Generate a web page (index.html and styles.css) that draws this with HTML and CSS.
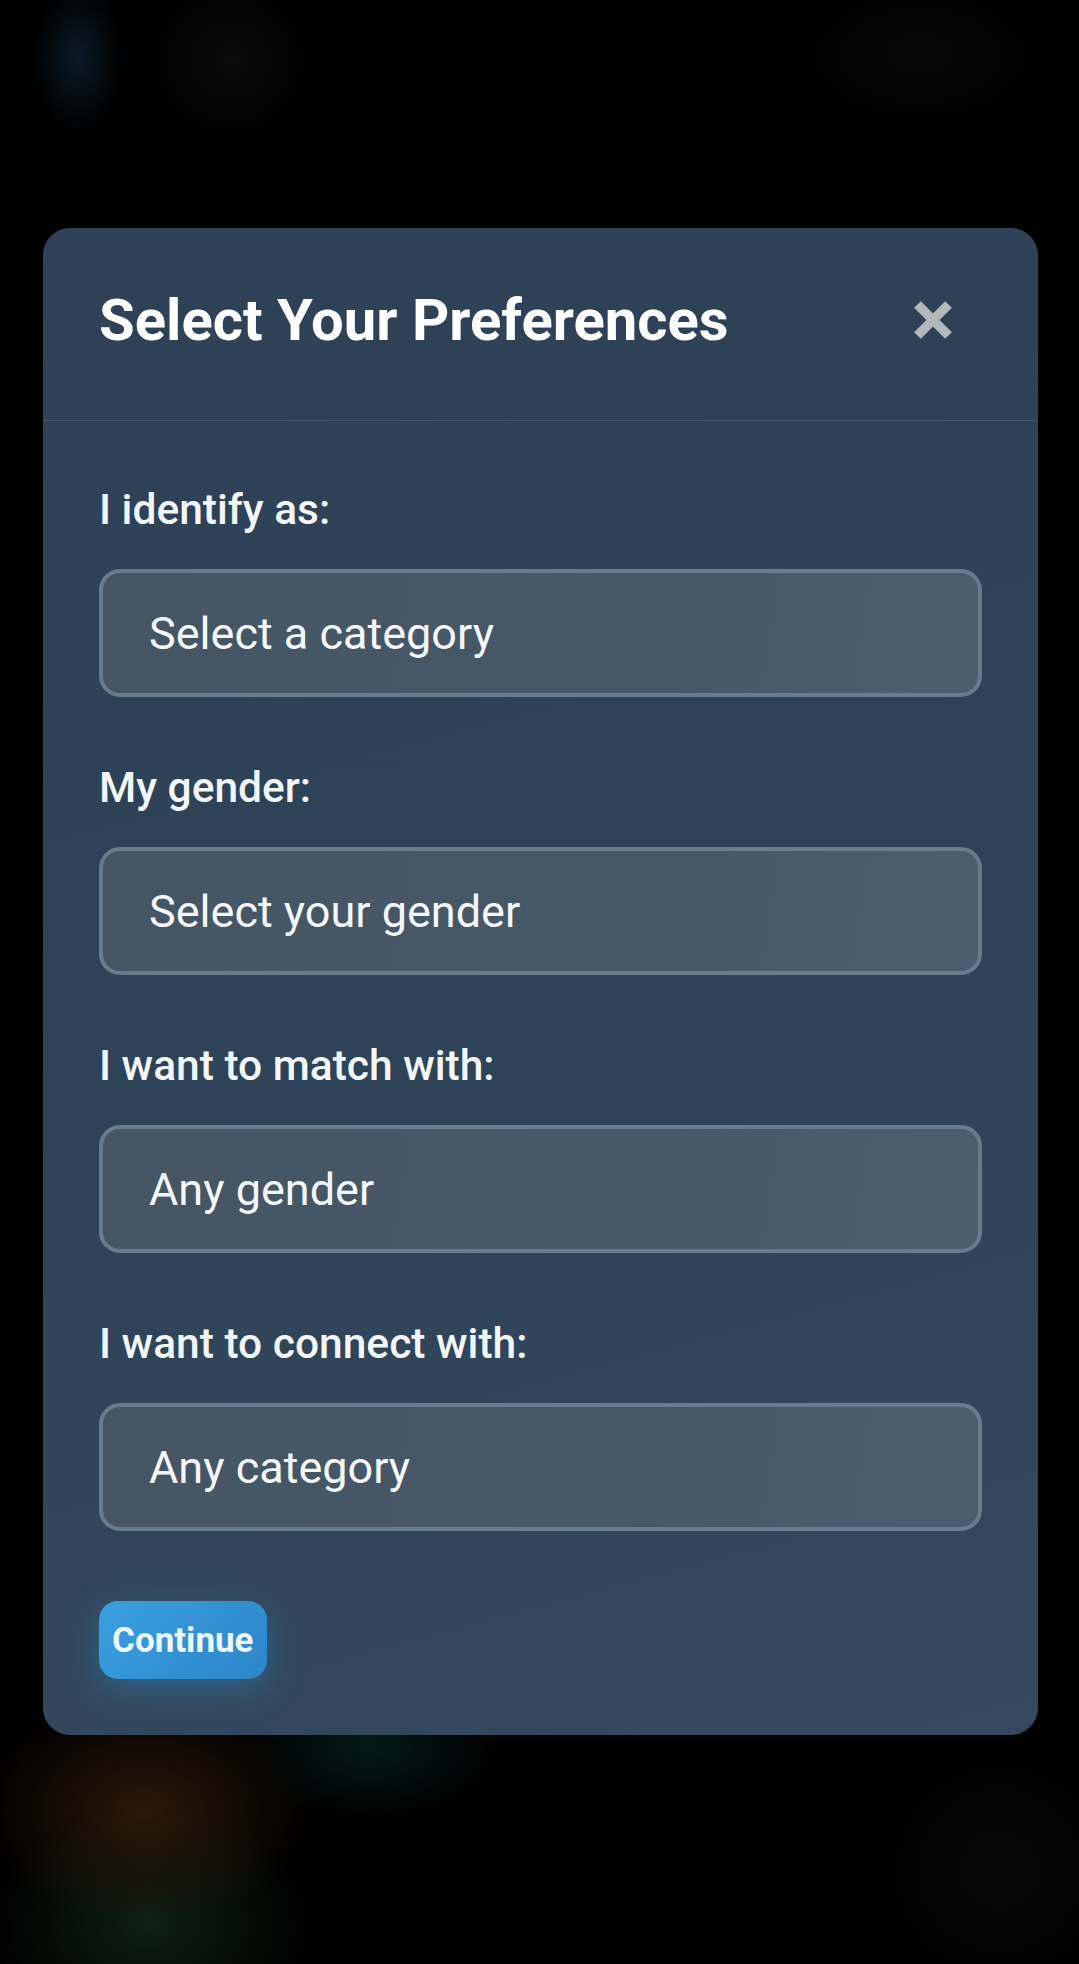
FILE: index.html
```html
<!DOCTYPE html>
<html lang="en">
<head>
<meta charset="utf-8">
<title>Select Your Preferences</title>
<link rel="stylesheet" href="styles.css">
</head>
<body>
  <div class="modal">
    <div class="modal-header">
      <h2 class="modal-title">Select Your Preferences</h2>
      <button class="close-btn" aria-label="Close">
        <svg width="38" height="38" viewBox="0 0 38 38">
          <path d="M3.5 3.5 L34.5 34.5 M34.5 3.5 L3.5 34.5" stroke="#b3b8bd" stroke-width="9.5" fill="none"/>
        </svg>
      </button>
    </div>
    <div class="modal-body">
      <div class="form-group">
        <label class="form-label">I identify as:</label>
        <div class="select-box">Select a category</div>
      </div>
      <div class="form-group">
        <label class="form-label">My gender:</label>
        <div class="select-box">Select your gender</div>
      </div>
      <div class="form-group">
        <label class="form-label">I want to match with:</label>
        <div class="select-box">Any gender</div>
      </div>
      <div class="form-group">
        <label class="form-label">I want to connect with:</label>
        <div class="select-box">Any category</div>
      </div>
      <div class="actions">
        <button class="continue-btn">Continue</button>
      </div>
    </div>
  </div>
</body>
</html>
```
FILE: styles.css
```css
* { box-sizing: border-box; }
html, body { margin: 0; }
body {
  width: 1079px;
  min-height: 1964px;
  padding: 228px 42px 0 43px;
  font-family: Roboto, "Noto Sans", Arial, sans-serif;
  background-color: #000;
  background-image:
    radial-gradient(ellipse 45px 75px at 78px 58px, rgba(18,50,72,0.55), rgba(0,0,0,0) 100%),
    radial-gradient(circle 80px at 230px 60px, rgba(22,22,22,0.5), rgba(0,0,0,0) 100%),
    radial-gradient(ellipse 120px 70px at 920px 55px, rgba(20,20,20,0.4), rgba(0,0,0,0) 100%),
    radial-gradient(ellipse 165px 115px at 145px 1810px, rgba(46,25,8,0.95), rgba(0,0,0,0) 100%),
    radial-gradient(ellipse 160px 120px at 150px 1925px, rgba(14,36,22,0.9), rgba(0,0,0,0) 100%),
    radial-gradient(ellipse 130px 75px at 370px 1745px, rgba(4,30,26,0.9), rgba(0,0,0,0) 100%),
    radial-gradient(circle 120px at 1000px 1870px, rgba(14,14,14,0.6), rgba(0,0,0,0) 100%);
}
.modal {
  width: 995px;
  border-radius: 27px;
  background: linear-gradient(165deg, #2e4156 0%, #2f4358 50%, #34495e 100%);
  overflow: hidden;
}
.modal-header {
  display: flex;
  align-items: center;
  justify-content: space-between;
  padding: 56px 56px 64px 56px;
  border-bottom: 1px solid rgba(255,255,255,0.1);
}
.modal-title {
  margin: 0;
  font-size: 58px;
  line-height: 72px;
  font-weight: 700;
  color: #ffffff;
}
.close-btn {
  width: 38px;
  height: 38px;
  margin-right: 30px;
  padding: 0;
  border: 0;
  background: none;
  display: flex;
}
.modal-body {
  padding: 62px 56px 56px 56px;
}
.form-group {
  margin-bottom: 64px;
}
.form-label {
  display: block;
  font-size: 42.5px;
  line-height: 54px;
  font-weight: 500;
  color: #f3f6f9;
  margin-bottom: 32px;
}
.select-box {
  height: 128px;
  display: flex;
  align-items: center;
  padding: 0 46px;
  border: 4px solid #687c8e;
  border-radius: 21px;
  background: linear-gradient(100deg, #455564 0%, #475868 60%, #4b5d6f 100%);
  font-size: 45px;
  color: #f4f7fa;
}
.actions {
  margin-top: -58px;
  padding-top: 64px;
  display: flex;
}
.continue-btn {
  height: 78px;
  padding: 0 13px;
  border: 0;
  border-radius: 19px;
  background: linear-gradient(135deg, #3a9fe2 0%, #2c86c8 100%);
  box-shadow: 0 10px 34px rgba(52,152,219,0.35);
  font-family: Roboto, "Noto Sans", Arial, sans-serif;
  font-size: 35px;
  font-weight: 700;
  color: #eef8ff;
}
```
